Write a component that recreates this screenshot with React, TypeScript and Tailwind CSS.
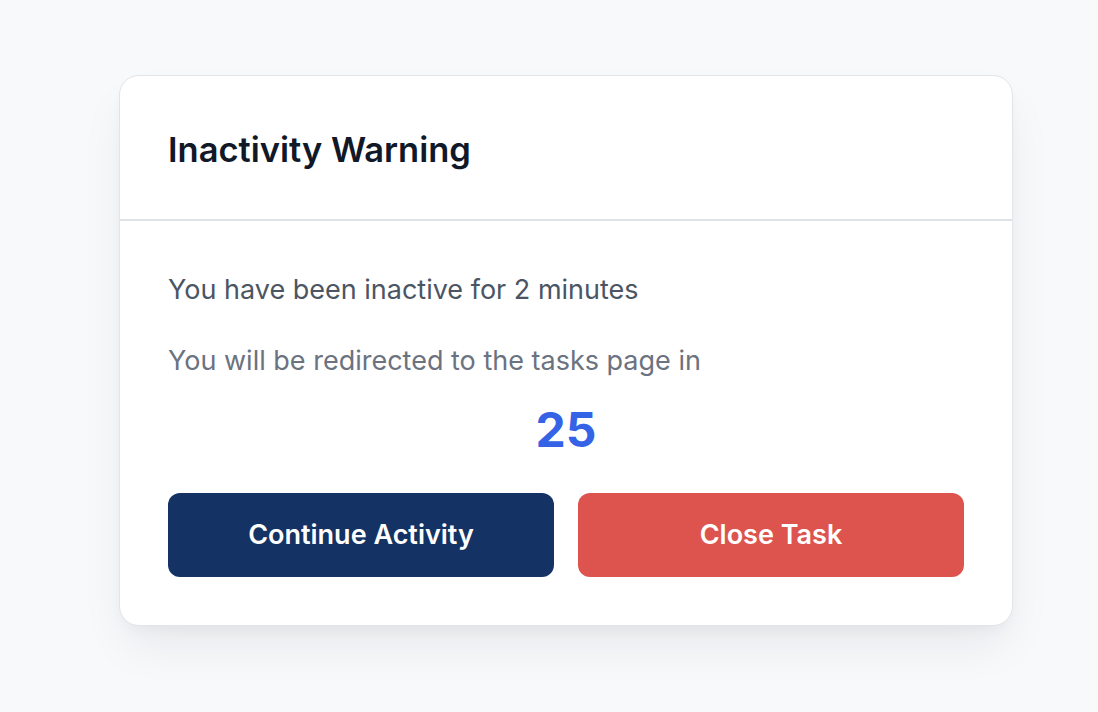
import React from "react";

export default function App() {
  return (
    <div
      className="min-h-[712px] w-full bg-[#f8f9fb] pt-[75px] pl-[119px]"
      style={{ fontFamily: "Inter, 'Noto Sans', sans-serif" }}
    >
      <div className="w-[894px] rounded-[20px] border border-[#e2e4e8] bg-white shadow-[0_24px_48px_-8px_rgba(15,23,42,0.08),0_8px_16px_-6px_rgba(15,23,42,0.05)]">
        <div className="border-b-2 border-[#dfe2e7] px-[48px] pt-[50px] pb-[46px]">
          <h1 className="text-[34.5px] leading-[47px] font-semibold text-[#111827]">
            Inactivity Warning
          </h1>
        </div>
        <div className="px-[48px] pt-[49px] pb-[48px]">
          <p className="text-[27px] leading-[40px] text-[#4b5563]">
            You have been inactive for 2 minutes
          </p>
          <p className="mt-[31px] text-[27px] leading-[40px] text-[#6b7280]">
            You will be redirected to the tasks page in
          </p>
          <div className="mt-[25px] text-center text-[48px] leading-[48px] font-bold text-[#3563e5]">
            25
          </div>
          <div className="mt-[39px] flex gap-[24px]">
            <button className="h-[84px] flex-1 rounded-[12px] bg-[#143264] text-[27px] font-semibold text-white">
              Continue Activity
            </button>
            <button className="h-[84px] flex-1 rounded-[12px] bg-[#dd544f] text-[27px] font-semibold text-white">
              Close Task
            </button>
          </div>
        </div>
      </div>
    </div>
  );
}
